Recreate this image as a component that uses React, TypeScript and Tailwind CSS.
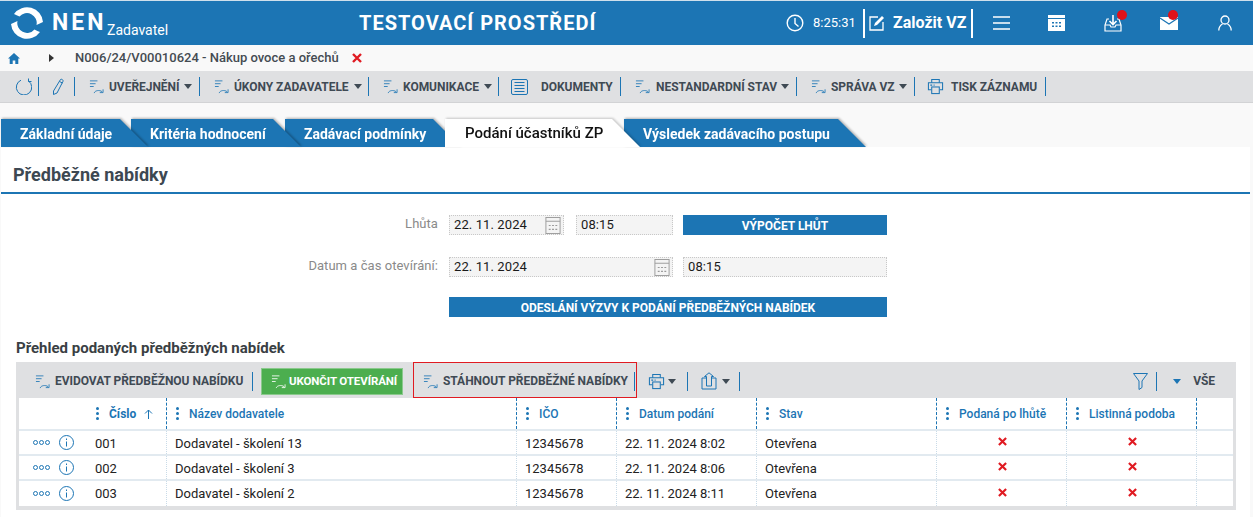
import { useState } from 'react';

const blue = 'text-[#1c75b4]';

function ListArrow({ className = blue }: { className?: string }) {
  return (
    <svg viewBox="0 0 16 16" fill="none" stroke="currentColor" strokeWidth="0.9" className={`w-[15px] h-[15px] mr-[1px] shrink-0 ${className}`}>
      <path d="M1 2h8M1 5h6M1 8h4" />
      <path d="M5.500 15c.8-2.800 5.500-3.600 8.500-1.500" />
      <path d="M15 11v3.500h-3.500" />
    </svg>
  );
}

function Caret({ className = 'border-t-[#3f4a54]' }: { className?: string }) {
  return <span className={`inline-block w-0 h-0 border-x-[4px] border-x-transparent border-t-[5px] ${className}`} />;
}

function PrintIcon() {
  return (
    <svg viewBox="0 0 18 18" fill="none" stroke="currentColor" strokeWidth="1.1" className={`w-[17px] h-[17px] shrink-0 ${blue}`}>
      <path d="M5 5V1.500h8V5" />
      <path d="M4.500 12.500h-3V5h15v7.500h-3" />
      <rect x="5" y="9.500" width="8" height="7" />
      <path d="M3.500 7.500h2M7 7.500h1" strokeWidth="1.4" />
    </svg>
  );
}

function XMark({ size = 'w-[9px] h-[9px]' }: { size?: string }) {
  return (
    <svg viewBox="0 0 10 10" className={`${size} text-[#e01b22]`} fill="none" stroke="currentColor" strokeWidth="2.4">
      <path d="M1 1l8 8M9 1l-8 8" />
    </svg>
  );
}

function CalIcon() {
  return (
    <svg viewBox="0 0 16 18" fill="none" stroke="#9a9a9a" strokeWidth="1" className="w-[16px] h-[17px] shrink-0">
      <rect x="0.500" y="0.500" width="15" height="17" />
      <path d="M0.500 4.500h15" />
      <path d="M3.500 9h2M7 9h2M10.500 9h2M3.500 13h2M7 13h2M10.500 13h2" strokeWidth="1.3" />
    </svg>
  );
}

function Logo() {
  return (
    <svg viewBox="0 0 32 32" className="w-[32px] h-[32px] shrink-0" fill="#fff">
      <path d="M3 7A16 16 0 0 1 32 15L25.500 18A9.800 9.800 0 0 0 8.500 9.500Q5.500 8 3 7Z" />
      <path d="M3 7A16 16 0 0 1 32 15L25.500 18A9.800 9.800 0 0 0 8.500 9.500Q5.500 8 3 7Z" transform="rotate(180 16 16)" />
    </svg>
  );
}

function Tab({ label, className }: { label: string; className: string }) {
  return (
    <div className={`relative drop-shadow-[1px_-1px_1px_rgba(0,0,0,0.28)] ${className}`}>
      <div className="h-[28px] pt-[5px] [clip-path:polygon(0_0,calc(100%-28px)_0,100%_100%,0_100%)] bg-[#1c75b4] text-white text-[14px] font-bold leading-[20px] pl-[19px] whitespace-nowrap">
        {label}
      </div>
    </div>
  );
}

function Group({ className, children }: { className: string; children: React.ReactNode }) {
  return <div className={`flex items-center h-[19px] border-r border-[#1c75b4] shrink-0 ${className}`}>{children}</div>;
}

const toolText = 'text-[12px] font-bold tracking-[-0.04px] text-[#3f4a54] whitespace-nowrap';

const rows = [
  { no: '001', name: 'Dodavatel - školení 13', date: '22. 11. 2024 8:02' },
  { no: '002', name: 'Dodavatel - školení 3', date: '22. 11. 2024 8:06' },
  { no: '003', name: 'Dodavatel - školení 2', date: '22. 11. 2024 8:11' },
];

const gridCols = 'grid grid-cols-[67px_80px_350px_100px_140px_180px_130px_130px_37px]';
const headCols = ['Název dodavatele', 'IČO', 'Datum podání', 'Stav', 'Podaná po lhůtě', 'Listinná podoba'];

function Dots() {
  return (
    <span className="flex flex-col gap-[2px] w-[3px] mr-[10px] shrink-0">
      <span className="w-[3px] h-[3px] rounded-full bg-[#1c75b4]" />
      <span className="w-[3px] h-[3px] rounded-full bg-[#1c75b4]" />
      <span className="w-[3px] h-[3px] rounded-full bg-[#1c75b4]" />
    </span>
  );
}

function Field({ value, className, cal }: { value: string; className: string; cal?: boolean }) {
  return (
    <div className={`h-[20px] flex items-center justify-between bg-[#f4f4f4] border border-dotted border-[#c8c8c8] pl-[4px] pr-[2px] text-[13px] text-[#1a1a1a] tracking-[0.1px] ${className}`}>
      <span>{value}</span>
      {cal && <CalIcon />}
    </div>
  );
}

export default function App() {
  const [active] = useState('Podání účastníků ZP');
  return (
    <div className="w-[1253px] h-[517px] overflow-hidden bg-[#f9f9f9] font-['Roboto',sans-serif]">
      {/* Header */}
      <header className="h-[45px] bg-[#1c75b4] border-t border-[#cfe0ec] flex items-center text-white">
        <div className="ml-[11px]"><Logo /></div>
        <span className="ml-[9px] text-[23px] font-bold tracking-[3px] leading-none -mt-[1px] w-[55px]">NEN</span>
        <span className="text-[14px] mt-[14px] leading-none w-[252px]">Zadavatel</span>
        <span className="text-[20px] font-bold tracking-[1px] w-[427px] whitespace-nowrap">TESTOVACÍ PROSTŘEDÍ</span>
        <svg viewBox="0 0 18 18" fill="none" stroke="currentColor" strokeWidth="1.4" className="w-[18px] h-[18px] shrink-0">
          <circle cx="9" cy="9" r="7.800" />
          <path d="M9 4v5.500l3.500 3" />
        </svg>
        <span className="ml-[9px] text-[13px] w-[50px]">8:25:31</span>
        <div className="flex items-center h-[29px] border-x-2 border-white w-[110px] shrink-0">
          <svg viewBox="0 0 16 16" fill="none" stroke="currentColor" strokeWidth="1.3" className="w-[16px] h-[16px] ml-[4px] shrink-0">
            <path d="M9 2H1v13h13V7" />
            <path d="M5 11l1-3 7-7 2 2-7 7z" fill="currentColor" stroke="none" />
          </svg>
          <span className="ml-[8px] text-[16px] font-bold whitespace-nowrap">Založit VZ</span>
        </div>
        <svg viewBox="0 0 17 14" stroke="currentColor" strokeWidth="1.5" className="ml-[20px] w-[17px] h-[14px] shrink-0">
          <path d="M0 1h17M0 7h17M0 13h17" />
        </svg>
        <svg viewBox="0 0 17 16" className="ml-[38px] w-[17px] h-[16px] shrink-0" fill="currentColor">
          <path d="M0 0h17v3H0zM0 4h17v12H0z" />
          <path d="M4 7h2v1.500H4zM7.500 7h2v1.500h-2zM11 7h2v1.500h-2zM4 10.500h2V12H4zM7.500 10.500h2V12h-2zM11 10.500h2V12h-2z" fill="#1c75b4" />
        </svg>
        <div className="relative ml-[39px] w-[18px] h-[18px] shrink-0">
          <svg viewBox="0 0 18 18" fill="none" stroke="currentColor" strokeWidth="1.2" className="w-[18px] h-[18px]">
            <path d="M5 5H3L1 11v6h16v-6l-2-6h-2" />
            <path d="M1 11h5l1 2h4l1-2h5" />
            <path d="M9 1v9M5.500 7L9 10.500 12.500 7" strokeWidth="1.6" />
          </svg>
          <span className="absolute -top-[4px] left-[13px] w-[10px] h-[10px] rounded-full bg-[#df1219]" />
        </div>
        <div className="relative ml-[38px] w-[18px] h-[13px] shrink-0">
          <svg viewBox="0 0 18 13" className="w-[18px] h-[13px]">
            <path d="M0 0h18v13H0z" fill="currentColor" />
            <path d="M0 1l9 6 9-6" fill="none" stroke="#1c75b4" strokeWidth="1.100" />
          </svg>
          <span className="absolute -top-[7px] left-[8px] w-[10px] h-[10px] rounded-full bg-[#df1219]" />
        </div>
        <svg viewBox="0 0 14 16" fill="none" stroke="currentColor" strokeWidth="1.3" className="ml-[40px] w-[14px] h-[16px] shrink-0">
          <circle cx="7" cy="5" r="4" />
          <path d="M0.800 15.500c0-3.500 2-5.500 3.700-6.500M13.200 15.500c0-3.500-2-5.500-3.700-6.500" />
        </svg>
      </header>

      {/* Breadcrumb */}
      <div className="h-[26px] flex items-center text-[13px] font-medium text-[#444b52]">
        <svg viewBox="0 0 12 11" className={`ml-[8px] w-[12px] h-[11px] shrink-0 ${blue}`} fill="currentColor">
          <path d="M6 0L0 5.500h1.700V11h3V7.500h2.600V11h3V5.500H12z" />
        </svg>
        <span className="ml-[29px] w-0 h-0 border-y-[4px] border-y-transparent border-l-[5px] border-l-[#333]" />
        <span className="ml-[21px] whitespace-nowrap">N006/24/V00010624 - Nákup ovoce a ořechů</span>
        <span className="ml-[13px] flex"><XMark size="w-[10px] h-[10px]" /></span>
      </div>

      {/* Main toolbar */}
      <div className="h-[32px] bg-[#dfe0e2] border-b border-[#d2d3d5] flex items-center">
        <Group className="w-[39px] pl-[15px]">
          <svg viewBox="0 0 17 17" fill="none" stroke="#1c75b4" strokeWidth="1" className="w-[17px] h-[17px]">
            <path d="M6 2.200A7.700 7.700 0 1 0 13.500 3" />
            <path d="M13.500 0.500v3h3" />
          </svg>
        </Group>
        <Group className="w-[36px] pl-[13px]">
          <svg viewBox="0 0 12 17" fill="none" stroke="#1c75b4" strokeWidth="1" className="w-[12px] h-[17px]">
            <path d="M8.500 1.500c1-.8 3 .3 2.500 1.800L5 15l-3.500 1.500L1.500 13zM7.500 3.500l3 1.500" />
          </svg>
        </Group>
        <Group className="w-[125px] pl-[14px]">
          <ListArrow />
          <span className={`ml-[4px] ${toolText}`}>UVEŘEJNĚNÍ</span>
          <span className="ml-[5px] flex"><Caret /></span>
        </Group>
        <Group className="w-[169px] pl-[14px]">
          <ListArrow />
          <span className={`ml-[4px] ${toolText}`}>ÚKONY ZADAVATELE</span>
          <span className="ml-[5px] flex"><Caret /></span>
        </Group>
        <Group className="w-[130px] pl-[14px]">
          <ListArrow />
          <span className={`ml-[4px] ${toolText}`}>KOMUNIKACE</span>
          <span className="ml-[5px] flex"><Caret /></span>
        </Group>
        <Group className="w-[122px] pl-[12px]">
          <svg viewBox="0 0 17 16" fill="none" stroke="#1c75b4" strokeWidth="1" className="w-[17px] h-[16px] shrink-0">
            <rect x="0.500" y="0.500" width="16" height="15" rx="1.500" />
            <path d="M3.500 3.500h10M3.500 6.500h10M3.500 9.500h10M3.500 12.500h10" />
          </svg>
          <span className={`ml-[13px] ${toolText}`}>DOKUMENTY</span>
        </Group>
        <Group className="w-[176px] pl-[14px]">
          <ListArrow />
          <span className={`ml-[5px] ${toolText}`}>NESTANDARDNÍ STAV</span>
          <span className="ml-[4px] flex"><Caret /></span>
        </Group>
        <Group className="w-[118px] pl-[14px]">
          <ListArrow />
          <span className={`ml-[4px] ${toolText}`}>SPRÁVA VZ</span>
          <span className="ml-[4px] flex"><Caret /></span>
        </Group>
        <Group className="w-[131px] pl-[12px]">
          <PrintIcon />
          <span className={`ml-[7px] ${toolText}`}>TISK ZÁZNAMU</span>
        </Group>
      </div>

      {/* Tabs */}
      <div className="flex mt-[16px] ml-[1px]">
        <Tab label="Základní údaje" className="w-[147px] -mr-[17px] z-40" />
        <Tab label="Kritéria hodnocení" className="w-[170px] -mr-[16px] z-30" />
        <Tab label="Zadávací podmínky" className="w-[176px] -mr-[16px] z-20" />
        <div className="relative z-30 w-[195px] -mr-[16px] drop-shadow-[1px_-1px_1px_rgba(0,0,0,0.2)]">
          <div className="h-[28px] pt-[4px] pl-[20px] [clip-path:polygon(0_0,calc(100%-28px)_0,100%_100%,0_100%)] bg-white text-[#111] text-[15px] font-medium leading-[20px] whitespace-nowrap">
            {active}
          </div>
        </div>
        <Tab label="Výsledek zadávacího postupu" className="w-[242px] z-10" />
      </div>

      {/* Content */}
      <main className="ml-[1px] mr-[3px] bg-white h-[370px]">
        <h1 className="h-[45px] pl-[12px] pt-[16px] text-[18px] font-bold leading-[24px] text-[#3d4852]">Předběžné nabídky</h1>
        <div className="h-[2px] bg-[#1c75b4]" />

        {/* Form */}
        <div className="mt-[21px] flex items-center">
          <span className="w-[437px] text-right text-[13px] tracking-[0.05px] text-[#8a8a8a] -mt-[2px]">Lhůta</span>
          <Field value="22. 11. 2024" cal className="ml-[11px] w-[115px]" />
          <Field value="08:15" className="ml-[12px] w-[97px]" />
          <button className="ml-[10px] w-[204px] h-[20px] pt-[1px] bg-[#1c75b4] text-white text-[12px] font-bold">VÝPOČET LHŮT</button>
        </div>
        <div className="mt-[22px] flex items-center">
          <span className="w-[437px] text-right text-[13px] tracking-[0.05px] text-[#8a8a8a] -mt-[2px]">Datum a čas otevírání:</span>
          <Field value="22. 11. 2024" cal className="ml-[11px] w-[224px]" />
          <Field value="08:15" className="ml-[10px] w-[204px]" />
        </div>
        <button className="block mt-[20px] ml-[448px] w-[438px] h-[20px] pt-[1px] bg-[#1c75b4] text-white text-[12px] font-bold">
          ODESLÁNÍ VÝZVY K PODÁNÍ PŘEDBĚŽNÝCH NABÍDEK
        </button>

        {/* Overview */}
        <h2 className="mt-[21px] ml-[15px] text-[15px] font-bold leading-[20px] text-[#3a3f44]">Přehled podaných předběžných nabídek</h2>
        <section className="mt-[4px] ml-[15px] w-[1220px] bg-[#dfe0e2] px-[3px] pb-[4px]">
          <div className="h-[36px] pt-[2px] -mx-[3px] flex items-center">
            <Group className="w-[237px] pl-[19px]">
              <ListArrow />
              <span className={`ml-[4px] ${toolText}`}>EVIDOVAT PŘEDBĚŽNOU NABÍDKU</span>
            </Group>
            <button className="ml-[8px] w-[142px] h-[27px] mt-[1px] flex items-center pl-[9px] bg-[#4cae4f] border border-[#8ac98c] text-white text-[11.5px] tracking-[-0.1px] font-bold whitespace-nowrap shrink-0">
              <ListArrow className="text-white" />
              <span className="ml-[2px]">UKONČIT OTEVÍRÁNÍ</span>
            </button>
            <div className="ml-[10px] w-[224px] h-[36px] -mt-[2px] border border-[#e01b22] flex items-center pt-[2px] pl-[9px] shrink-0">
              <ListArrow />
              <span className={`ml-[4px] ${toolText}`}>STÁHNOUT PŘEDBĚŽNÉ NABÍDKY</span>
              <span className="ml-[6px] h-[19px] border-r border-[#1c75b4]" />
            </div>
            <Group className="w-[51px] pl-[11px]">
              <PrintIcon />
              <span className="ml-[3px] flex"><Caret /></span>
            </Group>
            <Group className="w-[52px] pl-[13px]">
              <svg viewBox="0 0 16 18" fill="none" stroke="#1c75b4" strokeWidth="1" className="w-[16px] h-[18px] shrink-0">
                <path d="M5 6H1v11h14V6h-4" />
                <path d="M5.500 14V4.500H3.500L8 .8l4.500 3.700h-2V14z" />
              </svg>
              <span className="ml-[5px] flex"><Caret /></span>
            </Group>
            <div className="ml-auto flex items-center pr-[21px]">
              <svg viewBox="0 0 15 17" fill="none" stroke="#1c75b4" strokeWidth="1" className="w-[15px] h-[17px]">
                <path d="M0.500 0.500h14L9 8v6.500L6 16.500V8z" />
              </svg>
              <span className="ml-[8px] h-[19px] border-r border-[#1c75b4]" />
              <span className="ml-[16px] flex"><Caret className="border-t-[#1c75b4]" /></span>
              <span className={`ml-[12px] ${toolText}`}>VŠE</span>
            </div>
          </div>

          <div className="bg-white">
            <div className={`${gridCols} h-[33px] border-b-2 border-[#e2eaf0]`}>
              <div />
              <div className="flex items-center pl-[10px] text-[12px] font-bold text-[#1c75b4]">
                <Dots />
                Číslo
                <svg viewBox="0 0 9 10" fill="none" stroke="currentColor" className="ml-[8px] w-[9px] h-[10px]">
                  <path d="M4.500 10V1M1 4.500L4.500 1 8 4.500" />
                </svg>
              </div>
              {headCols.map((h) => (
                <div key={h} className="flex items-center pl-[9px] text-[12px] font-medium text-[#1c75b4] border-l border-dashed border-[#1c75b4] whitespace-nowrap">
                  <Dots />
                  {h}
                </div>
              ))}
              <div className="border-l border-dashed border-[#1c75b4]" />
            </div>
            {rows.map((r, i) => (
              <div key={r.no} className={`${gridCols} h-[25px] text-[13px] text-[#222] ${i < 2 ? 'border-b-2 border-[#e2eaf0]' : ''}`}>
                <div className="flex items-center pl-[14px]">
                  <span className="flex gap-[1px]">
                    <span className="w-[5px] h-[5px] rounded-full border border-[#1c75b4]" />
                    <span className="w-[5px] h-[5px] rounded-full border border-[#1c75b4]" />
                    <span className="w-[5px] h-[5px] rounded-full border border-[#1c75b4]" />
                  </span>
                  <svg viewBox="0 0 15 15" fill="none" stroke="#1c75b4" className="ml-[9px] w-[15px] h-[15px]">
                    <circle cx="7.500" cy="7.500" r="7" />
                    <path d="M7.500 6.500v5M7.500 3.500v1.500" />
                  </svg>
                </div>
                <div className={`flex items-center pl-[9px] ${i < 2 ? 'pt-[2px]' : ''}`}>{r.no}</div>
                <div className={`flex items-center pl-[8px] border-l border-dotted border-[#c9dbe8] ${i < 2 ? 'pt-[2px]' : ''}`}>{r.name}</div>
                <div className={`flex items-center pl-[8px] border-l border-dotted border-[#c9dbe8] ${i < 2 ? 'pt-[2px]' : ''}`}>12345678</div>
                <div className={`flex items-center pl-[8px] border-l border-dotted border-[#c9dbe8] ${i < 2 ? 'pt-[2px]' : ''}`}>{r.date}</div>
                <div className={`flex items-center pl-[8px] border-l border-dotted border-[#c9dbe8] ${i < 2 ? 'pt-[2px]' : ''}`}>Otevřena</div>
                <div className="flex items-center justify-center pb-[2px] pl-[1px] border-l border-dotted border-[#c9dbe8]"><XMark /></div>
                <div className="flex items-center justify-center pb-[2px] pl-[1px] border-l border-dotted border-[#c9dbe8]"><XMark /></div>
                <div className="border-l border-dotted border-[#c9dbe8]" />
              </div>
            ))}
          </div>
        </section>
      </main>
    </div>
  );
}
